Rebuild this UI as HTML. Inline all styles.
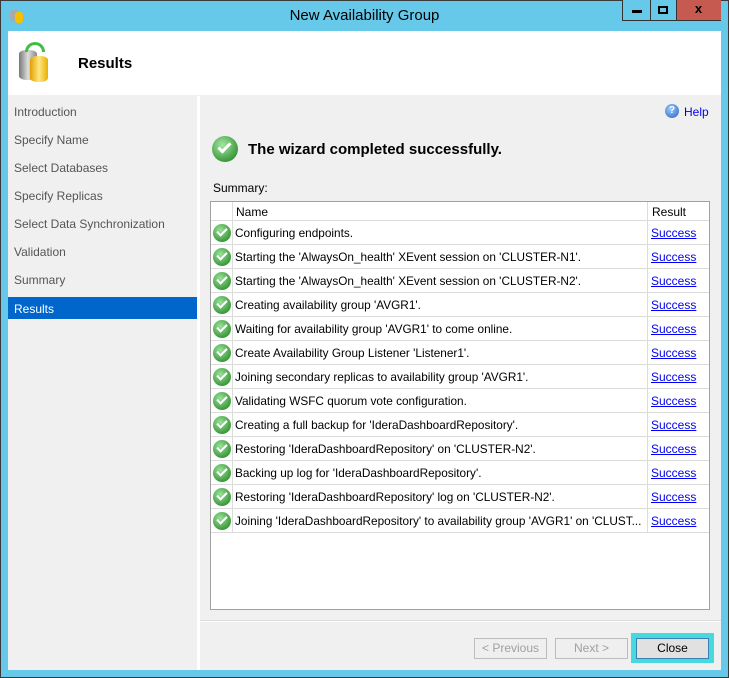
<!DOCTYPE html><html><head><style>
*{margin:0;padding:0;box-sizing:border-box}
body{width:729px;height:678px;background:#66c9ea;font-family:"Liberation Sans",sans-serif;font-size:12px;position:relative;overflow:hidden}
.a{position:absolute}
.nav div{position:absolute;left:6px;color:#555;font-size:12px}
.row{position:absolute;left:211px;width:498px;height:24px;border-bottom:1px solid #dcdcdc}
.row .ic{position:absolute;left:2px;top:3px;width:18px;height:18px;border-radius:50%;background:radial-gradient(circle at 40% 35%,#9be29b,#3d9b3d 70%,#2a7a2a);}
.row .ic:after{content:"";position:absolute;left:4px;top:4px;width:8px;height:4px;border-left:2px solid #fff;border-bottom:2px solid #fff;transform:rotate(-45deg)}
.row .n{position:absolute;left:24px;top:5px;color:#000;white-space:nowrap;overflow:hidden;width:408px;font-size:11.8px}
.row .r{position:absolute;left:440px;top:5px;color:#0000ee;text-decoration:underline}
.vl{position:absolute;top:0;bottom:0;width:1px;background:#dcdcdc}
.btn{position:absolute;height:21px;border:1px solid #bcbcbc;background:#efefef;color:#a0a0a0;text-align:center;line-height:19px}
</style></head><body>
<div class="a" style="left:0;top:0;width:729px;height:678px;border:1px solid #3a3a3a"></div>
<div class="a" style="left:9px;top:6px;width:16px;height:17px"><div class="a" style="left:1px;top:4px;width:8px;height:11px;background:#aaa;border-radius:3px"></div><div class="a" style="left:6px;top:6px;width:8px;height:11px;background:#f5c000;border-radius:3px"></div></div>
<div class="a" style="left:0;width:729px;top:7px;text-align:center;font-size:15px;color:#000">New Availability Group</div>
<div class="a" style="left:622px;top:0;width:99px;height:21px;border:1px solid #333;border-top:none;background:#66c9ea"><div class="a" style="left:27px;top:0;width:1px;height:21px;background:#333"></div><div class="a" style="left:53px;top:0;width:45px;height:20px;background:#c75a50;border-left:1px solid #333"></div><div class="a" style="left:9px;top:10px;width:10px;height:3px;background:#000"></div><div class="a" style="left:35px;top:6px;width:10px;height:8px;border:2px solid #000"></div><div class="a" style="left:53px;top:1px;width:45px;text-align:center;font-weight:bold;font-size:13px">x</div></div>
<div class="a" style="left:8px;top:31px;width:713px;height:639px;background:#f0f0f0"></div>
<div class="a" style="left:8px;top:31px;width:713px;height:64px;background:#fff"></div>
<div class="a" style="left:19px;top:42px;width:34px;height:40px"><div class="a" style="left:0;top:8px;width:18px;height:30px;border-radius:8px/4px;background:linear-gradient(90deg,#777,#ddd,#888)"></div><div class="a" style="left:11px;top:14px;width:18px;height:26px;border-radius:8px/4px;background:linear-gradient(90deg,#e0a000,#ffe680,#e8b000)"></div><div class="a" style="left:6px;top:0;width:20px;height:10px;border:3px solid #3fbf3f;border-bottom:none;border-radius:10px 10px 0 0"></div></div>
<div class="a" style="left:78px;top:55px;font-size:15px;font-weight:bold">Results</div>
<div class="a" style="left:8px;top:96px;width:189px;height:574px;background:#f0f0f0"></div>
<div class="a" style="left:197px;top:96px;width:3px;height:574px;background:#fff"></div>
<div class="nav a" style="left:8px;top:96px;width:189px;height:574px">
<div style="top:9px">Introduction</div><div style="top:37px">Specify Name</div><div style="top:65px">Select Databases</div><div style="top:93px">Specify Replicas</div><div style="top:121px">Select Data Synchronization</div><div style="top:149px">Validation</div><div style="top:177px">Summary</div>
<div style="left:0;top:201px;width:189px;height:22px;background:#0066cc;color:#fff;padding:5px 6px">Results</div></div>
<div class="a" style="left:665px;top:104px;width:14px;height:14px;border-radius:50%;background:radial-gradient(circle at 40% 35%,#9cf,#2a5fc0);color:#fff;font-size:10px;text-align:center;line-height:14px;font-weight:bold">?</div>
<div class="a" style="left:684px;top:105px;color:#0000ee">Help</div>
<div class="a" style="left:212px;top:136px;width:26px;height:26px;border-radius:50%;background:radial-gradient(circle at 40% 35%,#a5e6a5,#3d9b3d 70%,#2a7a2a)"><div class="a" style="left:6px;top:7px;width:13px;height:7px;border-left:3px solid #fff;border-bottom:3px solid #fff;transform:rotate(-45deg)"></div></div>
<div class="a" style="left:248px;top:141px;font-size:15px;font-weight:bold">The wizard completed successfully.</div>
<div class="a" style="left:213px;top:181px">Summary:</div>
<div class="a" style="left:210px;top:201px;width:500px;height:409px;background:#fff;border:1px solid #a0a0a0"></div>
<div class="a" style="left:211px;top:202px;width:498px;height:19px;border-bottom:1px solid #dcdcdc"><div class="a" style="left:25px;top:3px">Name</div><div class="a" style="left:441px;top:3px">Result</div></div>
<div class="a" style="left:211px;top:202px;width:498px;height:331px"><div class="vl" style="left:21px"></div><div class="vl" style="left:436px"></div></div>
<div class="row" style="top:221px"><div class="ic"></div><div class="n">Configuring endpoints.</div><div class="r">Success</div></div>
<div class="row" style="top:245px"><div class="ic"></div><div class="n">Starting the 'AlwaysOn_health' XEvent session on 'CLUSTER-N1'.</div><div class="r">Success</div></div>
<div class="row" style="top:269px"><div class="ic"></div><div class="n">Starting the 'AlwaysOn_health' XEvent session on 'CLUSTER-N2'.</div><div class="r">Success</div></div>
<div class="row" style="top:293px"><div class="ic"></div><div class="n">Creating availability group 'AVGR1'.</div><div class="r">Success</div></div>
<div class="row" style="top:317px"><div class="ic"></div><div class="n">Waiting for availability group 'AVGR1' to come online.</div><div class="r">Success</div></div>
<div class="row" style="top:341px"><div class="ic"></div><div class="n">Create Availability Group Listener 'Listener1'.</div><div class="r">Success</div></div>
<div class="row" style="top:365px"><div class="ic"></div><div class="n">Joining secondary replicas to availability group 'AVGR1'.</div><div class="r">Success</div></div>
<div class="row" style="top:389px"><div class="ic"></div><div class="n">Validating WSFC quorum vote configuration.</div><div class="r">Success</div></div>
<div class="row" style="top:413px"><div class="ic"></div><div class="n">Creating a full backup for 'IderaDashboardRepository'.</div><div class="r">Success</div></div>
<div class="row" style="top:437px"><div class="ic"></div><div class="n">Restoring 'IderaDashboardRepository' on 'CLUSTER-N2'.</div><div class="r">Success</div></div>
<div class="row" style="top:461px"><div class="ic"></div><div class="n">Backing up log for 'IderaDashboardRepository'.</div><div class="r">Success</div></div>
<div class="row" style="top:485px"><div class="ic"></div><div class="n">Restoring 'IderaDashboardRepository' log on 'CLUSTER-N2'.</div><div class="r">Success</div></div>
<div class="row" style="top:509px"><div class="ic"></div><div class="n">Joining 'IderaDashboardRepository' to availability group 'AVGR1' on 'CLUST...</div><div class="r">Success</div></div>
<div class="a" style="left:200px;top:620px;width:521px;height:1px;background:#dcdcdc"></div>
<div class="a" style="left:200px;top:621px;width:521px;height:1px;background:#fff"></div>
<div class="btn" style="left:474px;top:638px;width:73px">&lt; Previous</div>
<div class="btn" style="left:555px;top:638px;width:73px">Next &gt;</div>
<div class="a" style="left:631px;top:633px;width:83px;height:30px;background:#46d9e0"></div>
<div class="btn" style="left:636px;top:638px;width:73px;background:#e1e1e1;border-color:#3c7fb1;color:#000">Close</div>
</body></html>
